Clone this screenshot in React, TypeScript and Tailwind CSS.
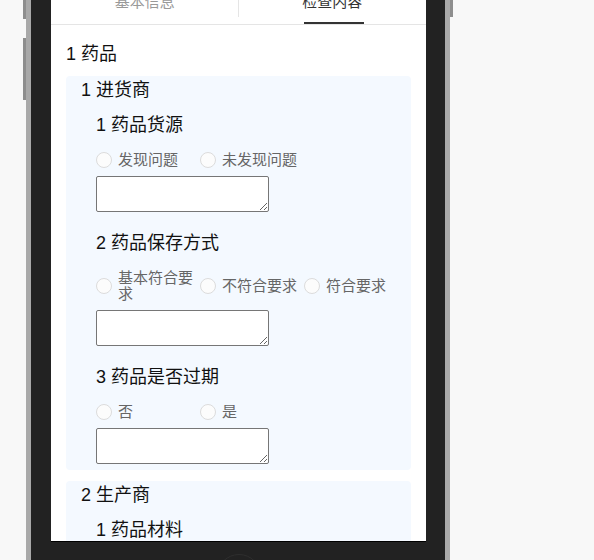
import React from "react";

const Radio = ({ label }: { label: string }) => (
  <div className="flex w-[104px] shrink-0 items-center">
    <span className="h-4 w-4 shrink-0 rounded-full border border-[#dcdcdc] bg-[#fcfcfc]" />
    <span className="ml-[6px] w-[80px] text-[15px] leading-[16px] text-[#666]">{label}</span>
  </div>
);

const Question = ({
  title,
  options,
  first,
}: {
  title: string;
  options: string[];
  first?: boolean;
}) => (
  <div className={first ? "mt-[10px]" : "mt-[19px]"}>
    <div className="text-[18px] leading-[25px] text-[#111]">{title}</div>
    <div className="mt-[14px] flex">
      {options.map((o) => (
        <Radio key={o} label={o} />
      ))}
    </div>
    <textarea className="mt-[8px] block h-[36px] w-[173px] rounded-[2px] border border-[#767676] bg-white" />
  </div>
);

export default function App() {
  return (
    <div className="relative h-[560px] w-[594px] overflow-hidden bg-[#f8f8f8] font-['Liberation_Sans','Noto_Sans_CJK_SC',sans-serif]">
      {/* side buttons */}
      <div className="absolute left-[23px] top-0 h-[19px] w-[3px] bg-[#8e8e8e]" />
      <div className="absolute left-[23px] top-[38px] h-[62px] w-[3px] bg-[#8e8e8e]" />
      <div className="absolute left-[450px] top-0 h-[17px] w-[3px] bg-[#8e8e8e]" />

      <div className="ml-[26px] -mt-[20px] flex w-[424px] border-x-[5px] border-[#a9a9a9] bg-[#222222] pl-[20px] pr-[19px]">
        <div className="w-[375px]">
          <div className="h-[562px] overflow-hidden border-b border-black bg-white">
            {/* tabs */}
            <div className="flex h-[45px] border-b border-[#e5e5e5]">
              <div className="relative flex flex-1 items-center justify-center text-[15px] text-[#999]">
                基本信息
                <span className="absolute right-0 top-[7px] h-[30px] w-px bg-[#e5e5e5]" />
              </div>
              <div className="relative flex flex-1 items-center justify-center text-[15px] text-[#333]">
                检查内容
                <span className="absolute bottom-0 left-[65px] h-[2px] w-[60px] bg-[#333]" />
              </div>
            </div>

            <div className="px-[15px] pt-[17px]">
              <div className="text-[18px] leading-[25px] text-[#111]">1 药品</div>

              <div className="mt-[9px] rounded-[4px] bg-[#f4f9ff] px-[15px] pb-[6px] pt-[2px]">
                <div className="text-[18px] leading-[25px] text-[#111]">1 进货商</div>
                <div className="pl-[15px]">
                  <Question first title="1 药品货源" options={["发现问题", "未发现问题"]} />
                  <Question title="2 药品保存方式" options={["基本符合要求", "不符合要求", "符合要求"]} />
                  <Question title="3 药品是否过期" options={["否", "是"]} />
                </div>
              </div>

              <div className="mt-[11px] rounded-[4px] bg-[#f4f9ff] px-[15px] pb-[6px] pt-[2px]">
                <div className="text-[18px] leading-[25px] text-[#111]">2 生产商</div>
                <div className="pl-[15px]">
                  <Question first title="1 药品材料" options={["发现问题", "未发现问题"]} />
                </div>
              </div>
            </div>
          </div>
          <div className="flex h-[60px] justify-center">
            <div className="mt-[12px] h-[44px] w-[44px] rounded-full border border-[#2e2e2e]" />
          </div>
        </div>
      </div>
    </div>
  );
}
